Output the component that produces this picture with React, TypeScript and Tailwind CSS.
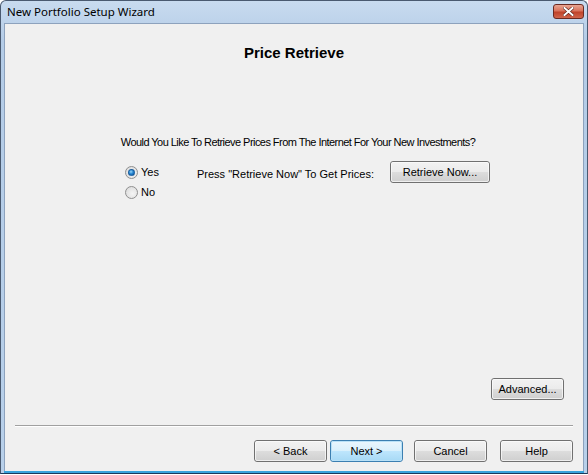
import React from "react";

const font = { fontFamily: '"Liberation Sans", Arial, sans-serif' };

function Btn({ children, w, primary, className = "" }: { children: React.ReactNode; w: string; primary?: boolean; className?: string }) {
  return (
    <div
      className={`${w} ${className} h-[22px] rounded-[3px] border flex items-center justify-center text-[11px] text-black ${
        primary
          ? "border-[#3c7fb1] bg-[linear-gradient(#eaf6fd_0%,#d9f0fc_50%,#bee6fd_50%,#a7d9f5_100%)]"
          : "border-[#707070] bg-[linear-gradient(#f2f2f2_0%,#ebebeb_50%,#dddddd_50%,#cfcfcf_100%)]"
      }`}
    >
      <div className={`w-full h-full rounded-[2px] border flex items-center justify-center ${primary ? "border-[#b9e1f7]" : "border-[#fcfcfc]/70"}`}>
        {children}
      </div>
    </div>
  );
}

function Radio({ checked }: { checked?: boolean }) {
  return (
    <div className="w-[13px] h-[13px] rounded-full border border-[#8f8f8f] bg-[radial-gradient(circle_at_60%_60%,#f4f4f4,#d8d8d8)] flex items-center justify-center">
      {checked && (
        <div className="w-[7px] h-[7px] rounded-full bg-[radial-gradient(circle_at_40%_35%,#9ad6f7_0%,#2a8ad4_45%,#0b4f9a_100%)] border border-[#1b4f86]/60" />
      )}
    </div>
  );
}

export default function App() {
  return (
    <div className="w-[588px] h-[475px] overflow-hidden bg-white" style={font}>
      <div className="w-[588px] h-[474px] flex flex-col rounded-t-[6px] border border-[#4a5a70] bg-[linear-gradient(#c8dbef,#b4cce7_40px,#b8d0ea)] border-b-[#1c3a5c]">
        {/* title bar */}
        <div className="h-[22px] flex items-center justify-between pl-[6px] pr-[3px]">
          <span className="text-[11.5px] text-black leading-none" style={{ fontFamily: '"Noto Sans", "Liberation Sans", sans-serif' }}>
            New Portfolio Setup Wizard
          </span>
          <div className="w-[31px] h-[15px] mt-[-2px] rounded-[3px] border border-[#6b2a22] bg-[linear-gradient(#e8a593_0%,#d9735c_45%,#c0432a_55%,#d0654c_100%)] flex items-center justify-center">
            <svg width="11" height="9" viewBox="0 0 11 9">
              <path d="M1.5 1 L9.5 8 M9.5 1 L1.5 8" stroke="#5a2018" strokeWidth="3.2" strokeLinecap="square" />
              <path d="M1.5 1 L9.5 8 M9.5 1 L1.5 8" stroke="#ffffff" strokeWidth="2" strokeLinecap="square" />
            </svg>
          </div>
        </div>
        {/* client */}
        <div className="flex-1 flex flex-col mx-[3px] mb-[2px] bg-[#f0f0f0] border border-[#8da2bd] border-b-0 shadow-[0_2px_0_#39a3dc]">
          <div className="mt-[20px] text-center font-bold text-[15px] leading-[18px] text-black">Price Retrieve</div>
          <div className="mt-[73px] text-center text-[11px] leading-[14px] text-black tracking-[-0.55px] pl-[8px]">
            Would You Like To Retrieve Prices From The Internet For Your New Investments?
          </div>
          <div className="mt-[12px] flex pl-[120px] text-[11px] text-black">
            <div className="flex flex-col gap-[7px] pt-[5px] w-[72px]">
              <div className="flex items-center gap-[3px] h-[13px]">
                <Radio checked />
                <span>Yes</span>
              </div>
              <div className="flex items-center gap-[3px] h-[13px]">
                <Radio />
                <span>No</span>
              </div>
            </div>
            <div className="pt-[5px] w-[193px]">Press "Retrieve Now" To Get Prices:</div>
            <Btn w="w-[100px]">Retrieve Now...</Btn>
          </div>
          <div className="flex-1" />
          <div className="flex justify-end pr-[19px]">
            <Btn w="w-[73px]">Advanced...</Btn>
          </div>
          <div className="mt-[25px] mx-[10px] h-[2px] border-t border-[#a0a0a0] border-b border-b-white" />
          <div className="mt-[13px] mb-[9px] flex justify-end pr-[10px]">
            <Btn w="w-[73px]">&lt; Back</Btn>
            <Btn w="w-[73px]" primary className="ml-[3px]">Next &gt;</Btn>
            <Btn w="w-[73px]" className="ml-[11px]">Cancel</Btn>
            <Btn w="w-[73px]" className="ml-[13px]">Help</Btn>
          </div>
        </div>
      </div>
    </div>
  );
}
